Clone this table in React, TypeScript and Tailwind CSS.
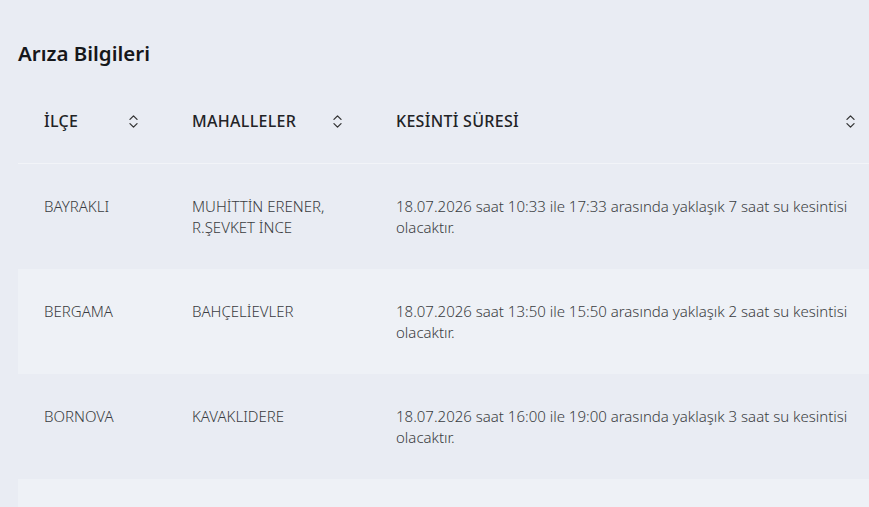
import { ChevronsUpDown } from 'lucide-react';

type Row = {
  ilce: string;
  mahalleler: string;
  sure: string;
};

const rows: Row[] = [
  {
    ilce: 'BAYRAKLI',
    mahalleler: 'MUHİTTİN ERENER, R.ŞEVKET İNCE',
    sure: '18.07.2026 saat 10:33 ile 17:33 arasında yaklaşık 7 saat su kesintisi olacaktır.',
  },
  {
    ilce: 'BERGAMA',
    mahalleler: 'BAHÇELİEVLER',
    sure: '18.07.2026 saat 13:50 ile 15:50 arasında yaklaşık 2 saat su kesintisi olacaktır.',
  },
  {
    ilce: 'BORNOVA',
    mahalleler: 'KAVAKLIDERE',
    sure: '18.07.2026 saat 16:00 ile 19:00 arasında yaklaşık 3 saat su kesintisi olacaktır.',
  },
  {
    ilce: 'BUCA',
    mahalleler: 'YILDIZ',
    sure: '18.07.2026 saat 09:00 ile 14:00 arasında yaklaşık 5 saat su kesintisi olacaktır.',
  },
];

function SortHeader({ label, width }: { label: string; width: string }) {
  return (
    <div className={`${width} shrink-0 flex items-center justify-between pl-[26px] pr-[24px]`}>
      <span className="text-[16px] leading-[24px] font-medium tracking-[0.3px] text-[#222326]">{label}</span>
      <ChevronsUpDown className="h-[17px] w-[17px] text-[#333]" strokeWidth={1.8} />
    </div>
  );
}

export default function App() {
  return (
    <div
      className="min-h-screen w-full overflow-hidden bg-[#e9ecf3] pl-[18px] pt-[40px]"
      style={{ fontFamily: '"Noto Sans", Lato, sans-serif' }}
    >
      {/* Başlık */}
      <h2 className="text-[20.5px] leading-[26px] font-semibold text-[#16171a]">Arıza Bilgileri</h2>

      <div className="mt-[13px] w-[865px]">
        {/* Tablo başlığı */}
        <div className="flex py-[30px] border-b border-[#f2f4f8]">
          <SortHeader label="İLÇE" width="w-[148px]" />
          <SortHeader label="MAHALLELER" width="w-[204px]" />
          <SortHeader label="KESİNTİ SÜRESİ" width="flex-1" />
        </div>

        {/* Satırlar */}
        {rows.map((row, i) => (
          <div
            key={row.ilce}
            className={`flex pt-[32px] pb-[31px] text-[15px] leading-[21px] font-light text-[#3a3c41] ${
              i % 2 === 1 ? 'bg-[#eef1f6]' : 'bg-[#e9ecf3]'
            }`}
          >
            <div className="w-[148px] shrink-0 pl-[26px] pr-[24px]">{row.ilce}</div>
            <div className="w-[204px] shrink-0 pl-[26px] pr-[24px]">{row.mahalleler}</div>
            <div className="flex-1 pl-[26px] pr-[24px]">{row.sure}</div>
          </div>
        ))}
      </div>
    </div>
  );
}
